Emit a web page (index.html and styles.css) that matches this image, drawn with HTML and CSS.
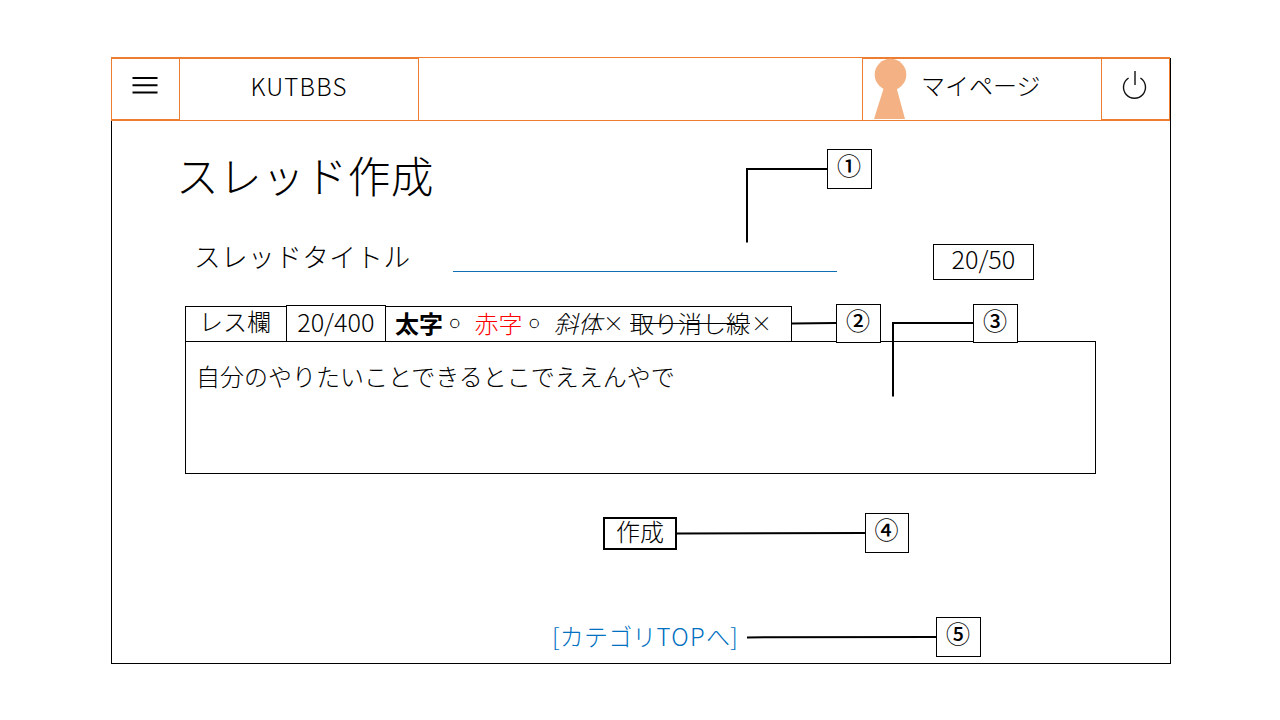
FILE: index.html
```html
<!DOCTYPE html>
<html lang="ja">
<head>
<meta charset="utf-8">
<title>スレッド作成</title>
<link rel="stylesheet" href="styles.css">
</head>
<body>
<div class="frame">
  <header class="header">
    <div class="icon-cell">
      <svg width="26" height="18" viewBox="0 0 26 18"><path d="M0.500 2h25M0.500 9.200h25M0.500 16.400h25" stroke="#000" stroke-width="2"/></svg>
    </div>
    <div class="brand"><span>KUTBBS</span></div>
    <div class="user">
      <svg class="avatar" width="34" height="62" viewBox="0 0 34 62"><circle cx="17.500" cy="17.600" r="15.800"/><path d="M12 27h10.500L32 62H1z"/></svg>
      <span class="user-name">マイページ</span>
    </div>
    <div class="icon-cell power">
      <svg width="26" height="30" viewBox="0 0 26 30" fill="none" stroke="#111" stroke-width="1.400"><path d="M6.600 8A11 11 0 1 0 18.400 8M13 1v14"/></svg>
    </div>
  </header>
  <main class="content">
    <h1 class="heading">スレッド作成</h1>
    <div class="title-row">
      <label class="title-label">スレッドタイトル</label>
      <div class="title-input"></div>
      <div class="counter title-counter"><span>20/50</span></div>
    </div>
    <div class="toolbar">
      <div class="res-label">レス欄</div>
      <div class="counter res-counter"><span>20/400</span></div>
      <div class="formats">
        <b class="f-bold">太字</b><span class="f-mark">○</span>
        <span class="f-red">赤字</span><span class="f-mark">○</span>
        <i class="f-italic">斜体</i><span class="f-cross">×</span>
        <s class="f-strike">取り消し線</s><span class="f-cross">×</span>
      </div>
    </div>
    <div class="editor">自分のやりたいことできるとこでええんやで</div>
    <button class="submit">作成</button>
    <a class="back">[カテゴリ<span class="latin">TOP</span>へ]</a>
  </main>
</div>
<svg class="leaders" width="1280" height="720" viewBox="0 0 1280 720" fill="none" stroke="#000" stroke-width="2">
  <path d="M747 242.500V169H828M893 396.500V323H974"/>
  <path d="M792 323.600L836 323M677 533.600L865 533M747 637.400L936 637"/>
</svg>
<div class="callout c1">①</div>
<div class="callout c2">②</div>
<div class="callout c3">③</div>
<div class="callout c4">④</div>
<div class="callout c5">⑤</div>
</body>
</html>
```
FILE: styles.css
```css
* { box-sizing: border-box; }
body {
  margin: 0;
  width: 1280px;
  height: 720px;
  overflow: hidden;
  background: #fff;
  color: #000;
  font-family: "Noto Sans CJK JP", sans-serif;
  font-weight: 300;
  font-size: 24px;
  display: flow-root;
}
.frame {
  display: flow-root;
  margin: 58px 0 0 111px;
  width: 1060px;
  height: 606px;
  border: 1px solid #000;
  border-top: 0;
}
.header {
  display: flex;
  margin: -1px 0 0 -1px;
  width: 1059px;
  height: 64px;
  border: 1px solid #ed7d31;
}
.icon-cell {
  width: 68px;
  border: 1px solid #ed7d31;
  border-left: 0;
  display: flex;
  justify-content: center;
  padding: 17px 1px 0 0;
}
.icon-cell svg { display: block; }
.brand {
  width: 239px;
  border-top: 1px solid #ed7d31;
  border-right: 1px solid #ed7d31;
  line-height: 54px;
  text-align: center;
  letter-spacing: 1.2px;
}
.user {
  width: 239px;
  margin-left: auto;
  border-top: 1px solid #ed7d31;
  border-left: 1px solid #ed7d31;
  display: flex;
  line-height: 52px;
}
.avatar { margin: -2px 0 0 10px; fill: #f4b183; }
.user-name { margin-left: 14px; }
.power {
  border-left: 1px solid #ed7d31;
  border-right: 0;
  padding: 11px 1px 0 0;
}
.content {
  display: flex;
  flex-direction: column;
  align-items: flex-start;
}
.heading {
  margin: 22px 0 0 64px;
  font-size: 42.67px;
  font-weight: 300;
  line-height: 64px;
  letter-spacing: 0.3px;
}
.title-row {
  display: flex;
  margin: 30px 0 0 82px;
  height: 44px;
}
.title-label { width: 259px; font-size: 26.67px; line-height: 38px; letter-spacing: 0.4px; }
.title-input {
  width: 384px;
  height: 35px;
  border-bottom: 1px solid #0f6fb5;
}
.counter { border: 1px solid #000; background: #fff; text-align: center; }
.counter span { display: inline-block; transform: scaleX(1.05); }
.title-counter { width: 101px; height: 36px; margin: 7px 0 0 96px; line-height: 28px; }
.toolbar {
  display: flex;
  align-items: flex-end;
  margin: 24px 0 0 73px;
  width: 607px;
  height: 36px;
}
.res-label {
  width: 101px;
  height: 35px;
  padding-left: 13px;
  border: 1px solid #000;
  border-width: 1px 0 0 1px;
  line-height: 28px;
}
.res-counter { width: 100px; height: 36px; border-bottom: 0; line-height: 31px; }
.formats {
  flex: 1;
  display: flex;
  height: 35px;
  padding-left: 9px;
  border: 1px solid #000;
  border-width: 1px 1px 0 0;
  line-height: 32px;
  white-space: nowrap;
}
.f-bold { font-weight: 700; }
.f-mark {
  width: 31.5px;
  padding-left: 7px;
  font-size: 9.5px;
  font-weight: 700;
  line-height: 33px;
  -webkit-text-stroke: 0.4px #000;
}
.f-red { color: #f00; }
.f-italic { font-style: italic; }
.f-cross { width: 28px; padding-left: 1px; font-size: 21px; line-height: 31px; }
.f-strike { text-decoration: line-through; text-decoration-thickness: 1px; }
.editor {
  width: 911px;
  height: 133px;
  margin-left: 73px;
  padding: 16px 10px;
  border: 1px solid #000;
  line-height: 36px;
}
.submit {
  display: flex;
  justify-content: center;
  align-items: flex-start;
  width: 74px;
  height: 33px;
  margin: 43px 0 0 491px;
  padding: 0;
  border: 2px solid #000;
  background: #fff;
  color: #000;
  font: inherit;
  line-height: 24px;
}
.back {
  margin: 68px 0 0 440px;
  color: #0070c0;
  line-height: 36px;
  letter-spacing: 0.2px;
}
.latin { letter-spacing: 1.3px; }
.leaders { position: absolute; left: 0; top: 0; }
.callout {
  position: absolute;
  width: 45px;
  height: 40px;
  border: 1px solid #000;
  background: #fff;
  font-weight: 500;
  line-height: 30px;
  padding-right: 1px;
  text-align: center;
}
.c1 { left: 827px; top: 149px; }
.c2 { left: 836px; top: 304px; height: 39px; }
.c3 { left: 973px; top: 304px; height: 39px; }
.c4 { left: 865px; top: 513px; width: 44px; }
.c5 { left: 936px; top: 617px; }
```
